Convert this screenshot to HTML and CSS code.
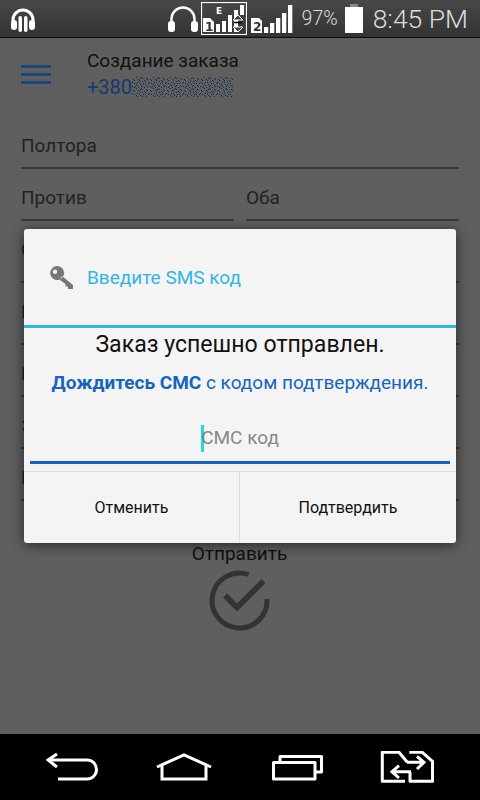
FILE: index.html
```html
<!DOCTYPE html>
<html lang="ru">
<head>
    <meta charset="UTF-8">
    <meta name="viewport" content="width=device-width, initial-scale=1.0">
    <title>Создание заказа</title>
    <link rel="stylesheet" href="styles.css">
</head>
<body>
    <div class="status-bar">
        <svg class="music-icon" width="24" height="24" viewBox="0 0 24 24">
            <path d="M2 14V12a10 10 0 0 1 20 0v2" fill="none" stroke="#fff" stroke-width="3"/>
            <rect x="0" y="12" width="6" height="10" rx="3" fill="#fff"/>
            <rect x="18" y="12" width="6" height="10" rx="3" fill="#fff"/>
            <rect x="7.500" y="8" width="3.500" height="16" rx="1.700" fill="#fff"/>
            <rect x="13" y="8" width="3.500" height="16" rx="1.700" fill="#fff"/>
        </svg>
        <div class="status-right">
            <svg class="phones-icon" width="30" height="27" viewBox="0 0 30 27">
                <path d="M3.500 18V14a11.500 11.500 0 0 1 23 0v4" fill="none" stroke="#fff" stroke-width="2.400"/>
                <rect x="0" y="16" width="7" height="11" rx="3" fill="#fff"/>
                <rect x="23" y="16" width="7" height="11" rx="3" fill="#fff"/>
            </svg>
            <svg class="sim-box" width="46" height="33" viewBox="0 0 46 33">
                <rect x="0.500" y="0.500" width="45" height="32" fill="none" stroke="#fff" stroke-width="1.200"/>
                <text x="15" y="12" class="sim-e">E</text>
                <path d="M2 16h7l4 4v10H2z" fill="#fff"/>
                <text x="4" y="29" class="sim-num">1</text>
                <path d="M15 22h4v8h-4zM21 19h4v11h-4zM27 13h4v17h-4zM33 8h4v22h-4zM39 3h4v10h-4z" fill="#fff"/>
                <path d="M37 13l5 5h-10zM37 30l5-5h-10z" fill="#444" stroke="#fff"/>
                <path d="M33 20.500h8" stroke="#000" stroke-width="1.500"/>
            </svg>
            <svg class="sim-two" width="42" height="33" viewBox="0 0 42 33">
                <path d="M0 16h8l3 3v12H0z" fill="#fff"/>
                <text x="2" y="29" class="sim-num">2</text>
                <path d="M13 25h4.300v6H13zM19 21h4.300v10H19zM25 16h4.300v15H25zM31 11h4.300v20H31zM37 3h4.300v28H37z" fill="#fff"/>
            </svg>
            <span class="battery-text">97%</span>
            <div class="battery">
                <div class="battery-cap"></div>
                <div class="battery-body"></div>
            </div>
            <span class="clock">8:45 PM</span>
        </div>
    </div>

    <main class="screen">
        <div class="order-head">
            <div class="menu-icon"><span></span><span></span><span></span></div>
            <div class="order-info">
                <div class="order-title">Создание заказа</div>
                <div class="order-phone">
                    +380<svg class="phone-noise" width="101" height="20">
                        <defs>
                            <pattern id="noise" width="17" height="11" patternUnits="userSpaceOnUse">
                                <path d="M1 2h1v1H1zM4 0h1v1H4zM7 3h1v1H7zM10 1h1v1h-1zM13 4h1v1h-1zM15 2h1v1h-1zM2 6h1v1H2zM5 5h1v1H5zM8 7h1v1H8zM11 6h1v1h-1zM14 8h1v1h-1zM0 9h1v1H0zM3 9h1v1H3zM6 10h1v1H6zM9 9h1v1H9zM12 10h1v1h-1zM16 6h1v1h-1zM6 2h1v1H6zM12 3h1v1h-1zM4 7h1v1H4zM2 3h1v1H2zM9 0h1v1H9zM14 1h1v1h-1zM0 5h1v1H0zM7 5h1v1H7zM10 4h1v1h-1zM13 6h1v1h-1zM5 8h1v1H5zM10 8h1v1h-1zM15 9h1v1h-1zM2 10h1v1H2zM8 1h1v1H8z" fill="#0f2a5c"/>
                            </pattern>
                        </defs>
                        <rect width="101" height="20" fill="url(#noise)"/>
                    </svg>
                </div>
            </div>
        </div>

        <form class="order-form">
            <div class="field">Полтора</div>
            <div class="field-row">
                <div class="field">Против</div>
                <div class="field">Оба</div>
            </div>
            <div class="field field-tall">Сумма</div>
            <div class="field field-tall">Город</div>
            <div class="field">Кв.</div>
            <div class="field">Этаж</div>
            <div class="field">Имя</div>
        </form>

        <div class="send">
            <div class="send-label">Отправить</div>
            <svg width="62" height="62" viewBox="0 0 62 62">
                <path d="M39.500 4.500A27.500 27.500 0 1 0 58 29" fill="none" stroke="#333" stroke-width="5"/>
                <path d="M16 25.500l12 12L54.500 11" fill="none" stroke="#333" stroke-width="5.500"/>
            </svg>
        </div>

        <div class="dialog">
            <div class="dialog-head">
                <svg class="key-icon" width="24" height="24" viewBox="0 0 24 24">
                    <path d="M7 0a7 7 0 1 1-1 13.900A7 7 0 0 1 7 0zM5 3.500a2.200 2.200 0 1 0 0 4.400 2.200 2.200 0 0 0 0-4.400zM12 10l11 9v4h-5v-2.500h-2.500V18L10 14z" fill="#777" fill-rule="evenodd"/>
                </svg>
                <span class="dialog-title">Введите SMS код</span>
            </div>
            <div class="dialog-body">
                <div class="dialog-msg">Заказ успешно отправлен.</div>
                <div class="dialog-hint"><b>Дождитесь СМС</b> с кодом подтверждения.</div>
                <div class="code-input"><i class="caret"></i>СМС код</div>
            </div>
            <div class="dialog-buttons">
                <div class="dialog-btn">Отменить</div>
                <div class="dialog-btn">Подтвердить</div>
            </div>
        </div>
    </main>

    <div class="nav-bar">
        <svg width="54" height="30" viewBox="0 0 54 30">
            <path d="M11 2L2 8l9 7M2 8h39a9.500 9.500 0 0 1 0 19H12" fill="none" stroke="#fff" stroke-width="3"/>
        </svg>
        <svg class="nav-home" width="60" height="30" viewBox="0 0 60 30">
            <path d="M3 15L30 3l27 12M8 13v14h44V13" fill="none" stroke="#fff" stroke-width="3"/>
        </svg>
        <svg width="54" height="28" viewBox="0 0 54 28">
            <path d="M3.500 9.500H45V26H3.500zM10 9V3.500h41.500V19H45" fill="none" stroke="#fff" stroke-width="3" stroke-linejoin="round"/>
        </svg>
        <svg width="56" height="32" viewBox="0 0 56 32">
            <path d="M25 30.300H2.300V1.300H19l8.300 10M29.300 1.300H42.300L52.500 10.300V30.300H30V21" fill="none" stroke="#fff" stroke-width="3" stroke-linejoin="round"/>
            <path d="M27 11.300H44M37 5.300l7 6-7 6.700M31 20.700H12M19 14.700l-7 6 7 6.300" fill="none" stroke="#fff" stroke-width="3"/>
        </svg>
    </div>
</body>
</html>
```

FILE: styles.css
```css
body {
    margin: 0;
    width: 480px;
    height: 800px;
    display: flex;
    flex-direction: column;
    overflow: hidden;
    font-family: Roboto, sans-serif;
    background-color: #5f5f5f;
}

/* status bar */
.status-bar {
    height: 37px;
    flex: none;
    display: flex;
    align-items: center;
    justify-content: space-between;
    padding: 0 12px 0 11px;
    background: linear-gradient(#484848, #333);
    border-bottom: 1px solid #0c0c0c;
    color: #ddd;
}
.music-icon {
    margin-top: 3px;
}
.status-right {
    display: flex;
    align-items: center;
}
.phones-icon {
    margin-right: 3px;
}
.sim-two {
    margin: 0 9px 0 4px;
}
.sim-e {
    font: bold 9px "DejaVu Sans", sans-serif;
    fill: #fff;
}
.sim-num {
    font: bold 12px "DejaVu Sans", sans-serif;
    fill: #333;
}
.battery-text {
    font-size: 19.500px;
    font-weight: 300;
    margin-right: 7px;
}
.battery {
    width: 18px;
    margin-right: 10px;
    display: flex;
    flex-direction: column;
    align-items: center;
}
.battery-cap {
    width: 8px;
    height: 3px;
    background: #888;
}
.battery-body {
    width: 18px;
    height: 26px;
    background: #fff;
}
.clock {
    font-size: 26.500px;
    font-weight: 300;
}

/* page under the dialog */
.screen {
    position: relative;
    flex: 1;
    min-height: 0;
}
.order-head {
    display: flex;
    padding: 11px 0 0 21px;
    height: 68px;
}
.menu-icon {
    width: 30px;
    margin: 16px 36px 0 0;
}
.menu-icon span {
    display: block;
    height: 3px;
    margin-bottom: 5px;
    background: #1b467c;
}
.order-title {
    font-size: 19px;
    line-height: 24px;
    color: #111;
}
.order-phone {
    display: flex;
    align-items: center;
    font-size: 20px;
    line-height: 28px;
    color: #17386e;
}
.order-form {
    padding: 0 21px;
}
.field {
    flex: 1;
    height: 52px;
    padding-top: 8px;
    box-sizing: border-box;
    border-bottom: 2px solid #3a3a3a;
    line-height: 42px;
    font-size: 19px;
    color: #222;
}
.field-row {
    display: flex;
    gap: 12px;
}
.field-tall {
    height: 62px;
}
.send {
    display: flex;
    flex-direction: column;
    align-items: center;
    padding-top: 41px;
    margin-left: -1px;
}
.send-label {
    font-size: 19px;
    line-height: 24px;
    margin-bottom: 4px;
    color: #111;
}

/* dialog */
.dialog {
    position: absolute;
    top: 191px;
    left: 24px;
    width: 432px;
    height: 314px;
    display: flex;
    flex-direction: column;
    background-color: #f4f4f4;
    border-radius: 3px;
    box-shadow: 0 2px 14px rgba(0, 0, 0, 0.6);
}
.dialog-head {
    height: 96px;
    flex: none;
    display: flex;
    align-items: center;
    padding-left: 26px;
    border-bottom: 3px solid #33b5e5;
}
.key-icon {
    margin: 1px 13px 0 0;
}
.dialog-title {
    font-size: 19px;
    color: #33b5e5;
}
.dialog-body {
    flex: 1;
    padding: 0 6px;
    text-align: center;
}
.dialog-msg {
    font-size: 23.100px;
    line-height: 34px;
    color: #111;
}
.dialog-hint {
    font-size: 19px;
    line-height: 24px;
    margin-top: 9px;
    color: #1565c0;
}
.code-input {
    margin-top: 12px;
    padding: 17px 0 9px;
    line-height: 28px;
    border-bottom: 3px solid #1565c0;
    font-size: 19px;
    color: #888;
}
.caret {
    display: inline-block;
    width: 3px;
    height: 27px;
    vertical-align: -8px;
    margin-right: -3px;
    background: #1fdcdc;
}
.dialog-buttons {
    height: 71px;
    flex: none;
    display: flex;
    border-top: 1px solid #ddd;
}
.dialog-btn {
    flex: 1;
    display: flex;
    align-items: center;
    justify-content: center;
    font-size: 16px;
    color: #111;
}
.dialog-btn:first-child {
    flex: 0 0 215px;
}
.dialog-btn + .dialog-btn {
    border-left: 1px solid #ddd;
}

/* bottom buttons */
.nav-bar {
    height: 66px;
    flex: none;
    display: flex;
    align-items: center;
    gap: 56px;
    padding-left: 46px;
    box-sizing: border-box;
    background-color: #000;
}
.nav-home {
    margin-left: -2px;
}
```
